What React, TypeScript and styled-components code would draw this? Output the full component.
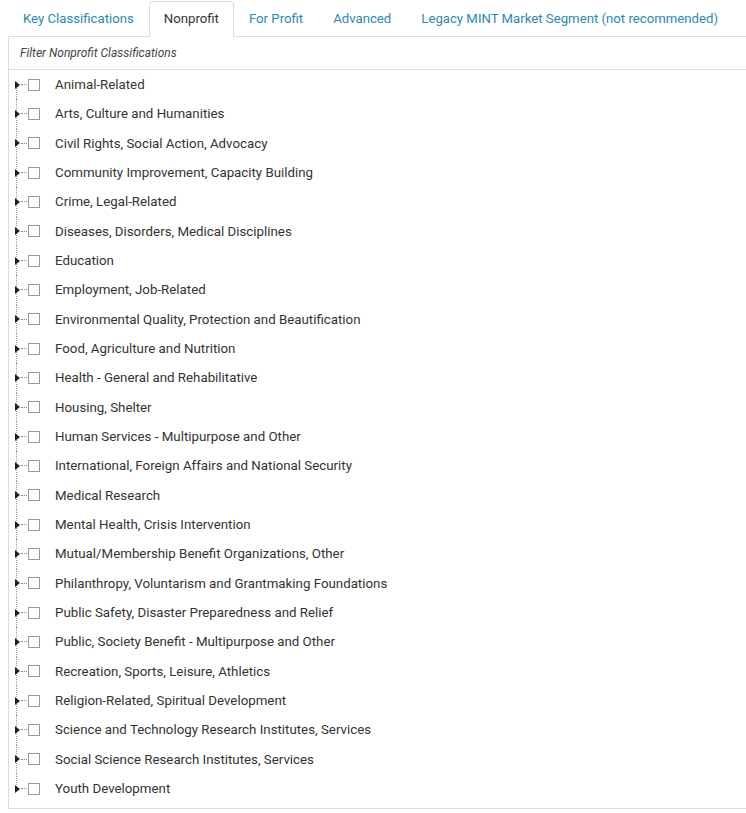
import React from 'react';
import styled, { createGlobalStyle } from 'styled-components';

const GlobalStyle = createGlobalStyle`
	html, body {
		margin: 0;
		padding: 0;
		background: #fff;
		overflow: hidden;
	}
	body {
		padding: 1px 0 0 8px;
		font-family: Roboto, "Liberation Sans", Arial, sans-serif;
		color: #333;
	}
`;

const TabBar = styled.ul`
	display: flex;
	list-style: none;
	margin: 0;
	padding: 0;
	height: 35px;
	position: relative;
	z-index: 1;
`;

const Tab = styled.li<{ active?: boolean }>`
	padding: 0 14px 2px;
	box-sizing: border-box;
	display: flex;
	align-items: center;
	font-size: 13.2px;
	color: ${props => (props.active ? '#333' : '#2a89b5')};
	border: 1px solid ${props => (props.active ? '#ddd' : 'transparent')};
	border-bottom: none;
	border-radius: 4px 4px 0 0;
	background: ${props => (props.active ? '#fff' : 'transparent')};
	height: ${props => (props.active ? '36px' : '35px')};
	white-space: nowrap;
	cursor: pointer;
`;

const Panel = styled.div`
	border: 1px solid #ddd;
	border-right: none;
	padding-bottom: 5px;
`;

const Filter = styled.div`
	height: 33px;
	box-sizing: border-box;
	border-bottom: 1px solid #ddd;
	display: flex;
	align-items: center;
	padding-left: 11px;
	font-size: 12px;
	font-style: italic;
	color: #444;
`;

const Tree = styled.ul`
	list-style: none;
	margin: 0;
	padding: 0;
`;

const Row = styled.li<{ first?: boolean; last?: boolean }>`
	position: relative;
	display: flex;
	align-items: center;
	height: 29.33px;
	padding-left: 6px;
	font-size: 13.3px;
	color: #333;

	&::before {
		content: '';
		position: absolute;
		left: 7px;
		top: ${props => (props.first ? '50%' : '0')};
		bottom: ${props => (props.last ? '50%' : '0')};
		border-left: 1px dotted #9a9a9a;
	}
`;

const Toggle = styled.span`
	position: relative;
	z-index: 1;
	width: 0;
	height: 0;
	border-left: 5px solid #222;
	border-top: 4px solid transparent;
	border-bottom: 4px solid transparent;
`;

const Dots = styled.span`
	width: 6px;
	border-top: 1px dotted #8a8a8a;
	margin: 0 1px;
`;

const Box = styled.span`
	width: 12px;
	height: 12px;
	box-sizing: border-box;
	border: 1px solid #999;
	background: #fff;
`;

const Label = styled.span`
	margin-left: 15px;
`;

const tabs = [
	'Key Classifications',
	'Nonprofit',
	'For Profit',
	'Advanced',
	'Legacy MINT Market Segment (not recommended)',
];

const items = [
	'Animal-Related',
	'Arts, Culture and Humanities',
	'Civil Rights, Social Action, Advocacy',
	'Community Improvement, Capacity Building',
	'Crime, Legal-Related',
	'Diseases, Disorders, Medical Disciplines',
	'Education',
	'Employment, Job-Related',
	'Environmental Quality, Protection and Beautification',
	'Food, Agriculture and Nutrition',
	'Health - General and Rehabilitative',
	'Housing, Shelter',
	'Human Services - Multipurpose and Other',
	'International, Foreign Affairs and National Security',
	'Medical Research',
	'Mental Health, Crisis Intervention',
	'Mutual/Membership Benefit Organizations, Other',
	'Philanthropy, Voluntarism and Grantmaking Foundations',
	'Public Safety, Disaster Preparedness and Relief',
	'Public, Society Benefit - Multipurpose and Other',
	'Recreation, Sports, Leisure, Athletics',
	'Religion-Related, Spiritual Development',
	'Science and Technology Research Institutes, Services',
	'Social Science Research Institutes, Services',
	'Youth Development',
];

export default function App() {
	return (
		<>
			<GlobalStyle />
			<TabBar>
				{tabs.map(t => (
					<Tab key={t} active={t === 'Nonprofit'}>
						{t}
					</Tab>
				))}
			</TabBar>
			<Panel>
				<Filter>Filter Nonprofit Classifications</Filter>
				<Tree>
					{items.map((item, i) => (
						<Row key={item} first={i === 0} last={i === items.length - 1}>
							<Toggle />
							<Dots />
							<Box />
							<Label>{item}</Label>
						</Row>
					))}
				</Tree>
			</Panel>
		</>
	);
}
